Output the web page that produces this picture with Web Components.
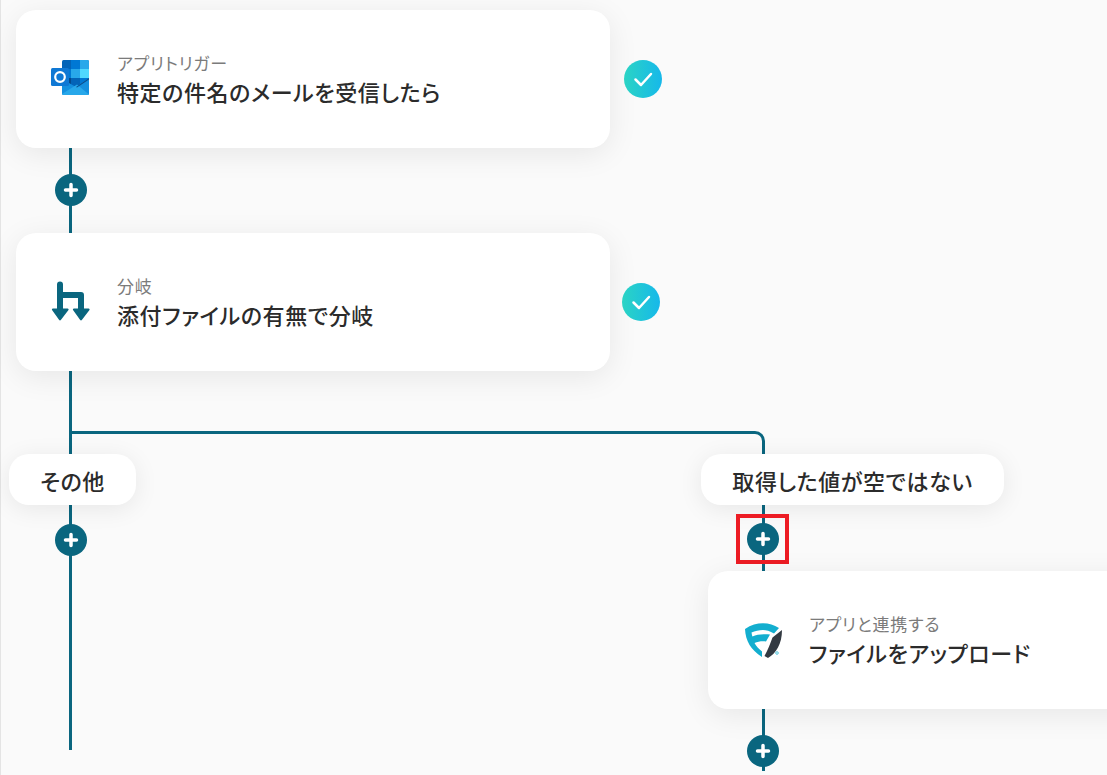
<!DOCTYPE html>
<html lang="ja">
<head>
<meta charset="utf-8">
<title>flow</title>
<style>
html, body { margin: 0; height: 100%; overflow: hidden; background: #fafafa; }
</style>
</head>
<body>
<flow-canvas>
  <flow-line style="left:69px;top:140px;width:3px;height:610px"></flow-line>
  <flow-line corner style="left:71px;top:431px;width:694px;height:340px"></flow-line>

  <flow-card style="left:16px;top:10px;width:594px" sub="アプリトリガー" title="特定の件名のメールを受信したら">
    <svg slot="icon" width="40" height="40" viewBox="0 0 40 40">
      <rect x="12" y="2" width="27" height="30" rx="1.500" fill="#0364b8"/>
      <rect x="21" y="2" width="9" height="9" fill="#0078d4"/>
      <path d="M30 2h7.500A1.500 1.500 0 0 1 39 3.500V11h-9z" fill="#28a8ea"/>
      <rect x="12" y="11" width="9" height="9" fill="#0078d4"/>
      <rect x="21" y="11" width="9" height="9" fill="#28a8ea"/>
      <rect x="30" y="11" width="9" height="9" fill="#50d9ff"/>
      <rect x="12" y="20" width="9" height="9" fill="#064a8c"/>
      <rect x="21" y="20" width="9" height="9" fill="#0364b8"/>
      <rect x="30" y="20" width="9" height="9" fill="#0078d4"/>
      <path d="M12 21l14 8 13-9v15.500a1.500 1.500 0 0 1-1.500 1.500h-24a1.500 1.500 0 0 1-1.500-1.500z" fill="#1490df"/>
      <path d="M12 36l15-9.500L39 36.500a1.500 1.500 0 0 1-1.500.5h-24A1.500 1.500 0 0 1 12 36z" fill="#28a8ea"/>
      <path d="M26 29l13-9v1.500L27 29.500z" fill="#0a4f8f"/>
      <rect x="1" y="10" width="18" height="18" rx="1.500" fill="#0f78d4"/>
      <circle cx="10" cy="19" r="4.800" fill="none" stroke="#fff" stroke-width="2.200"/>
    </svg>
  </flow-card>
  <flow-check style="left:624px;top:60px"></flow-check>
  <flow-plus style="left:55px;top:174px"></flow-plus>

  <flow-card style="left:16px;top:233px;width:594px" sub="分岐" title="添付ファイルの有無で分岐">
    <svg slot="icon" width="40" height="40" viewBox="0 0 40 40">
      <path d="M10 3.500V30M10 14H31V30" fill="none" stroke="#0a667f" stroke-width="6" stroke-linecap="round" stroke-linejoin="round"/>
      <path d="M3 27.500h14.500a1 1 0 0 1 .8 1.700L11 38.800a1.300 1.300 0 0 1-2 0L2.200 29.200A1 1 0 0 1 3 27.500z" fill="#0a667f"/>
      <path d="M24 27.500h14.500a1 1 0 0 1 .8 1.700L32 38.800a1.300 1.300 0 0 1-2 0L23.200 29.200A1 1 0 0 1 24 27.500z" fill="#0a667f"/>
    </svg>
  </flow-card>
  <flow-check style="left:622px;top:283px"></flow-check>

  <flow-label style="left:9px;top:454px;width:127px">その他</flow-label>
  <flow-label style="left:701px;top:454px;width:303px">取得した値が空ではない</flow-label>

  <flow-plus style="left:55px;top:524px"></flow-plus>
  <flow-plus style="left:747px;top:523px"></flow-plus>
  <flow-mark style="left:736px;top:514px"></flow-mark>

  <flow-card style="left:708px;top:571px;width:460px" sub="アプリと連携する" title="ファイルをアップロード">
    <svg slot="icon" width="40" height="40" viewBox="0 0 40 40">
      <path d="M3 10C9 6 15 4.300 21 4.300 27 4.300 32 6 37 9L32 14.500C28 12 24 11 21 11 17 11 13 12 9.500 13.500 9.800 15 10 16.500 10.500 17.500 15 15.500 21 15 28 15.500L24 22.500C20 22 16 22.500 12.500 24 14 27 17 30 20 32.500L20 38C9 31 3.500 22 3 10Z" fill="#13aecf"/>
      <path d="M40 11L30.500 18.500C28.500 24 26 31 22.500 37L26 39C34 34.500 40 25 40 11Z" fill="#333a42"/>
      <circle cx="35" cy="34" r="1.300" fill="none" stroke="#13aecf" stroke-width=".7"/>
    </svg>
  </flow-card>
  <flow-plus style="left:747px;top:735px"></flow-plus>
</flow-canvas>

<script>
class FlowCanvas extends HTMLElement {
    constructor() {
        super();
        this.attachShadow({ mode: 'open' }).innerHTML = `
        <style>
        :host {
            display: block;
            position: relative;
            width: 1107px;
            height: 775px;
            overflow: hidden;
            background: #fafafa;
            font-family: "Noto Sans CJK JP", "Noto Sans", sans-serif;
            color: #2b2b2b;
        }
        .edge { position: absolute; left: 0; top: 0; width: 1px; height: 100%; background: #e4e4e4; }
        </style>
        <div class="edge"></div>
        <slot></slot>`;
    }
}

class FlowLine extends HTMLElement {
    constructor() {
        super();
        this.attachShadow({ mode: 'open' }).innerHTML = `
        <style>
        :host { display: block; position: absolute; box-sizing: border-box; background: #0a667f; }
        :host([corner]) {
            background: none;
            border-top: 3px solid #0a667f;
            border-right: 3px solid #0a667f;
            border-top-right-radius: 10px;
        }
        </style>`;
    }
}

class FlowCard extends HTMLElement {
    constructor() {
        super();
        this.attachShadow({ mode: 'open' });
    }

    connectedCallback() {
        this.render();
    }

    render() {
        this.shadowRoot.innerHTML = `
        <style>
        :host {
            display: flex;
            position: absolute;
            box-sizing: border-box;
            height: 138px;
            align-items: center;
            gap: 27px;
            padding-left: 34px;
            padding-bottom: 2px;
            background: #fff;
            border-radius: 20px;
            box-shadow: 0 6px 30px rgba(0,0,0,.08);
        }
        .icon { width: 40px; height: 40px; flex: none; }
        .text { display: flex; flex-direction: column; gap: 1px; font-feature-settings: "palt"; }
        .sub { font-size: 17px; line-height: 24px; letter-spacing: .8px; color: #7b7b7b; }
        .title { font-size: 22px; line-height: 30px; font-weight: 500; letter-spacing: .6px; color: #2b2b2b; white-space: nowrap; }
        </style>
        <div class="icon"><slot name="icon"></slot></div>
        <div class="text">
            <div class="sub">${this.getAttribute('sub')}</div>
            <div class="title">${this.getAttribute('title')}</div>
        </div>`;
    }
}

class FlowLabel extends HTMLElement {
    constructor() {
        super();
        this.attachShadow({ mode: 'open' }).innerHTML = `
        <style>
        :host {
            display: flex;
            position: absolute;
            box-sizing: border-box;
            height: 51px;
            align-items: center;
            justify-content: center;
            background: #fff;
            border-radius: 20px;
            box-shadow: 0 4px 24px rgba(0,0,0,.08);
            font-size: 22px;
            font-weight: 500;
            font-feature-settings: "palt";
            letter-spacing: .6px;
            color: #2b2b2b;
            white-space: nowrap;
        }
        </style>
        <slot></slot>`;
    }
}

class FlowPlus extends HTMLElement {
    constructor() {
        super();
        this.attachShadow({ mode: 'open' }).innerHTML = `
        <style>
        :host { display: block; position: absolute; width: 32px; height: 32px; }
        svg { display: block; }
        </style>
        <svg width="32" height="32" viewBox="0 0 32 32">
            <circle cx="16" cy="16" r="16" fill="#0a667f"/>
            <path d="M16 10.500v11M10.500 16h11" stroke="#fff" stroke-width="3.500" stroke-linecap="round"/>
        </svg>`;
    }
}

class FlowCheck extends HTMLElement {
    constructor() {
        super();
        this.attachShadow({ mode: 'open' }).innerHTML = `
        <style>
        :host { display: block; position: absolute; width: 38px; height: 38px; }
        svg { display: block; }
        </style>
        <svg width="38" height="38" viewBox="0 0 38 38">
            <defs>
                <linearGradient id="g" x1="0" y1="0" x2="1" y2="0">
                    <stop offset="0" stop-color="#2bd4c4"/>
                    <stop offset="1" stop-color="#16b8ea"/>
                </linearGradient>
            </defs>
            <circle cx="19" cy="19" r="19" fill="url(#g)"/>
            <path d="M11.500 19.500l5.500 5.500 10-11" fill="none" stroke="#fff" stroke-width="2.500" stroke-linecap="round" stroke-linejoin="round"/>
        </svg>`;
    }
}

class FlowMark extends HTMLElement {
    constructor() {
        super();
        this.attachShadow({ mode: 'open' }).innerHTML = `
        <style>
        :host {
            display: block;
            position: absolute;
            box-sizing: border-box;
            width: 53px;
            height: 50px;
            border: 4px solid #ed1c24;
        }
        </style>`;
    }
}

customElements.define('flow-canvas', FlowCanvas);
customElements.define('flow-line', FlowLine);
customElements.define('flow-card', FlowCard);
customElements.define('flow-label', FlowLabel);
customElements.define('flow-plus', FlowPlus);
customElements.define('flow-check', FlowCheck);
customElements.define('flow-mark', FlowMark);
</script>
</body>
</html>
